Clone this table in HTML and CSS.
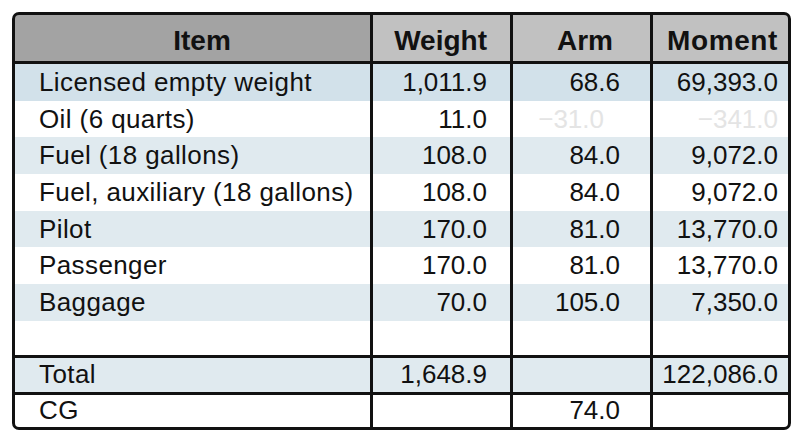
FILE: index.html
```html
<!DOCTYPE html>
<html lang="en">
<head>
<meta charset="utf-8">
<title>Weight and balance</title>
<link rel="stylesheet" href="styles.css">
</head>
<body>
<div class="sheet">
  <div class="row head">
    <div class="cell item sorted">Item</div>
    <div class="cell num weight">Weight</div>
    <div class="cell num arm">Arm</div>
    <div class="cell num moment">Moment</div>
  </div>
  <div class="body">
    <div class="row line sel">
      <div class="cell item">Licensed empty weight</div>
      <div class="cell num weight">1,011.9</div>
      <div class="cell num arm">68.6</div>
      <div class="cell num moment">69,393.0</div>
    </div>
    <div class="row line">
      <div class="cell item">Oil (6 quarts)</div>
      <div class="cell num weight">11.0</div>
      <div class="cell num arm faint neg">&minus;31.0</div>
      <div class="cell num moment faint">&minus;341.0</div>
    </div>
    <div class="row line alt">
      <div class="cell item">Fuel (18 gallons)</div>
      <div class="cell num weight">108.0</div>
      <div class="cell num arm">84.0</div>
      <div class="cell num moment">9,072.0</div>
    </div>
    <div class="row line">
      <div class="cell item">Fuel, auxiliary (18 gallons)</div>
      <div class="cell num weight">108.0</div>
      <div class="cell num arm">84.0</div>
      <div class="cell num moment">9,072.0</div>
    </div>
    <div class="row line alt">
      <div class="cell item">Pilot</div>
      <div class="cell num weight">170.0</div>
      <div class="cell num arm">81.0</div>
      <div class="cell num moment">13,770.0</div>
    </div>
    <div class="row line">
      <div class="cell item">Passenger</div>
      <div class="cell num weight">170.0</div>
      <div class="cell num arm">81.0</div>
      <div class="cell num moment">13,770.0</div>
    </div>
    <div class="row line alt">
      <div class="cell item">Baggage</div>
      <div class="cell num weight">70.0</div>
      <div class="cell num arm">105.0</div>
      <div class="cell num moment">7,350.0</div>
    </div>
    <div class="row line blank">
      <div class="cell item"></div>
      <div class="cell num weight"></div>
      <div class="cell num arm"></div>
      <div class="cell num moment"></div>
    </div>
  </div>
  <div class="row total alt">
    <div class="cell item">Total</div>
    <div class="cell num weight">1,648.9</div>
    <div class="cell num arm"></div>
    <div class="cell num moment">122,086.0</div>
  </div>
  <div class="row cg">
    <div class="cell item">CG</div>
    <div class="cell num weight"></div>
    <div class="cell num arm">74.0</div>
    <div class="cell num moment"></div>
  </div>
</div>
</body>
</html>
```

FILE: styles.css
```css
html, body {
  margin: 0;
  padding: 0;
  background: #ffffff;
}

body {
  font-family: "Liberation Sans", Arial, Helvetica, sans-serif;
  color: #111111;
}

.sheet {
  box-sizing: border-box;
  width: 779px;
  margin: 12px 0 0 12px;
  border: 3px solid #111111;
  border-radius: 7px;
  overflow: hidden;
  background: #111111;
  display: flex;
  flex-direction: column;
  gap: 3px;
}

.body {
  display: flex;
  flex-direction: column;
}

.row {
  display: grid;
  grid-template-columns: 355px 137px 137px 135px;
  column-gap: 3px;
}

.cell {
  display: flex;
  align-items: center;
  background: #ffffff;
  font-size: 26px;
  white-space: nowrap;
  box-sizing: border-box;
}

.item {
  padding-left: 24px;
  letter-spacing: 0.4px;
}

.num {
  justify-content: flex-end;
}

.num.weight { padding-right: 23px; }
.num.arm { padding-right: 30px; }
.num.moment { padding-right: 10px; }

/* header */
.head .cell {
  height: 46px;
  padding-top: 5px;
  font-size: 28px;
  font-weight: bold;
  background: #c1c1c1;
  letter-spacing: 0;
}

.head .cell.sorted {
  background: #a3a3a3;
  justify-content: center;
  padding-left: 19px;
}

.head .num.arm { padding-right: 37px; }
.head .num.moment { letter-spacing: 0.6px; }

/* body rows */
.line .cell { height: 36.7px; }
.line.blank .cell { height: 34px; }

.sel .cell { background: #d2e1ea; }
.alt .cell { background: #e0eaef; }

.faint { color: #e4e4e4; }
.num.arm.neg { padding-right: 46px; }

.total .cell { height: 34px; }
.cg .cell { height: 32px; }
```
